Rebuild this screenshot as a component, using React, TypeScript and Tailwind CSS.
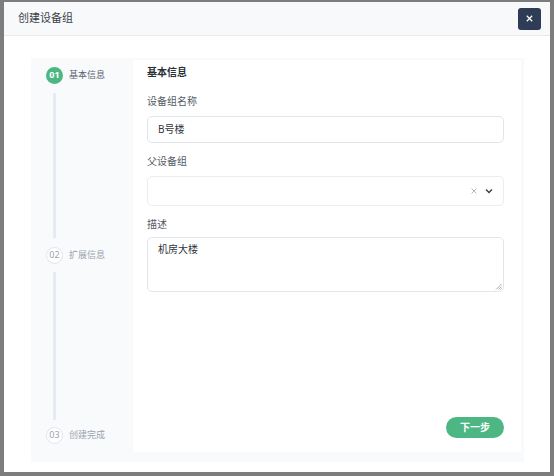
import React from "react";

const font = { fontFamily: '"Noto Sans", "Noto Sans CJK SC", sans-serif' };

function Step({ no, label, active }: { no: string; label: string; active?: boolean }) {
	return (
		<div className="flex items-center gap-[6px] h-[18px]">
			<div
				className={
					active
						? "w-[17px] h-[17px] rounded-full bg-[#4cb783] text-white text-[9px] font-bold flex items-center justify-center"
						: "w-[17px] h-[17px] rounded-full border border-[#e1e5ec] bg-white text-[#9aa3b0] text-[9px] flex items-center justify-center"
				}
			>
				{no}
			</div>
			<span className={active ? "text-[9px] text-[#5b6270]" : "text-[9px] text-[#9aa3b0]"}>{label}</span>
		</div>
	);
}

export default function App() {
	return (
		<div className="w-[554px] h-[476px] bg-[#7d7d7d] pl-[4px] pr-[4px] pt-[2px] pb-[4px]" style={font}>
			<div className="w-full h-full bg-white flex flex-col">
				<div className="h-[34px] bg-[#f8f9fb] border-b border-[#e6e9ee] flex items-center justify-between pl-[14px] pr-[9px] shrink-0">
					<span className="text-[11px] text-[#3a3f47]">创建设备组</span>
					<button className="w-[23px] h-[22px] rounded-[3px] bg-[#2f3c56] flex items-center justify-center">
						<svg width="9" height="9" viewBox="0 0 10 10" stroke="#ffffff" strokeWidth="1.4">
							<path d="M2 2 L8 8 M8 2 L2 8" />
						</svg>
					</button>
				</div>
				<div className="flex-1 pt-[22px] pl-[27px] pr-[26px] pb-[10px]">
					<div className="w-full h-full bg-[#f8fafc] flex">
						<div className="w-[102px] pl-[15px] pt-[8px] pb-[18px] flex flex-col">
							<Step no="01" label="基本信息" active />
							<div className="flex-1 flex flex-col items-start">
								<div className="ml-[7px] w-[3px] flex-1 bg-[#e6ebf3] mt-[9px] mb-[8px]" />
							</div>
							<Step no="02" label="扩展信息" />
							<div className="flex-1 flex flex-col items-start">
								<div className="ml-[7px] w-[3px] flex-1 bg-[#e6ebf3] mt-[8px] mb-[6px]" />
							</div>
							<Step no="03" label="创建完成" />
						</div>
						<div className="flex-1 bg-white mt-[2px] mb-[10px] mr-[3px] pl-[14px] pr-[17px] pt-[4px] pb-[14px] flex flex-col">
							<div className="text-[10px] font-bold text-[#2b2f36] h-[16px] flex items-center">基本信息</div>
							<div className="text-[10px] text-[#555b66] mt-[13px] h-[16px] flex items-center">设备组名称</div>
							<div className="mt-[7px] h-[27px] border border-[#e2e6ec] rounded-[5px] flex items-center px-[10px] text-[10px] text-[#30353c]">
								B号楼
							</div>
							<div className="text-[10px] text-[#555b66] mt-[10px] h-[16px] flex items-center">父设备组</div>
							<div className="mt-[7px] h-[30px] border border-[#e9ecf1] rounded-[5px] flex items-center justify-end pr-[10px] gap-[8px]">
								<svg width="6" height="6" viewBox="0 0 6 6" stroke="#b4bac4" strokeWidth="1">
									<path d="M0.5 0.5 L5.5 5.5 M5.5 0.5 L0.5 5.5" />
								</svg>
								<svg width="8" height="6" viewBox="0 0 8 6" fill="none" stroke="#3a3f47" strokeWidth="1.4">
									<path d="M1 1.5 L4 4.5 L7 1.5" />
								</svg>
							</div>
							<div className="text-[10px] text-[#555b66] mt-[10px] h-[16px] flex items-center">描述</div>
							<div className="relative mt-[5px] h-[55px] border border-[#e2e6ec] rounded-[5px] px-[10px] pt-[4px] text-[10px] text-[#30353c]">
								机房大楼
								<svg className="absolute right-[1px] bottom-[1px]" width="7" height="7" viewBox="0 0 7 7" stroke="#9aa0aa" strokeWidth="0.8">
									<path d="M6.5 1 L1 6.5 M6.5 3.5 L3.5 6.5 M6.5 5.5 L5.5 6.5" />
								</svg>
							</div>
							<div className="flex-1" />
							<div className="flex justify-end">
								<button className="w-[58px] h-[21px] rounded-full bg-[#4cb783] text-white text-[10px] font-bold">下一步</button>
							</div>
						</div>
					</div>
				</div>
			</div>
		</div>
	);
}
